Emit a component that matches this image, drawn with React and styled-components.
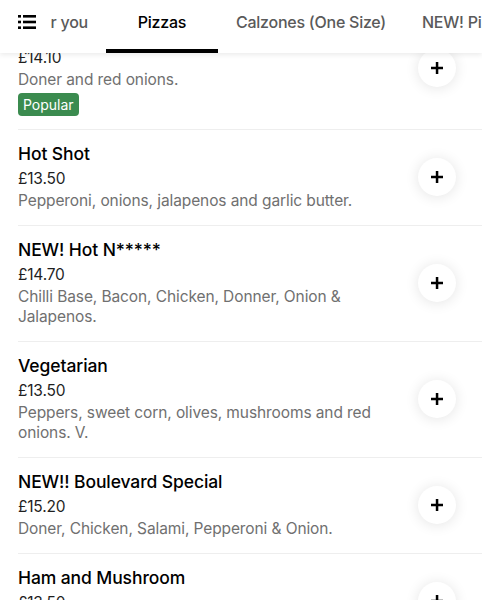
import styled, { createGlobalStyle } from "styled-components";

const GlobalStyle = createGlobalStyle`
  html, body {
    margin: 0;
    padding: 0;
    background: #ffffff;
    font-family: "Inter", "Noto Sans", sans-serif;
    color: #000000;
  }
  * {
    box-sizing: border-box;
  }
`;

const Page = styled.div`
  width: 482px;
  height: 600px;
  overflow: hidden;
  position: relative;
  background: #ffffff;
`;

// sticky category bar, lies over the scrolled list
const Header = styled.header`
  position: absolute;
  top: 0;
  left: 0;
  right: 0;
  height: 53px;
  display: flex;
  align-items: stretch;
  background: #ffffff;
  box-shadow: 0 2px 5px rgba(0, 0, 0, 0.08);
  z-index: 2;
`;

const MenuButton = styled.div`
  width: 51px;
  flex: none;
  display: flex;
  align-items: flex-start;
  padding: 15px 0 0 18px;
  background: #ffffff;
`;

const TabsViewport = styled.nav`
  flex: 1;
  min-width: 0;
  display: flex;
  overflow: hidden;
`;

const ClippedTab = styled.div`
  width: 55px;
  flex: none;
  display: flex;
  justify-content: flex-end;
  overflow: hidden;
  position: relative;
`;

const Tab = styled.div`
  flex: none;
  min-width: 112px;
  height: 53px;
  padding: 11px 18px 0;
  font-size: 16px;
  line-height: 22px;
  font-weight: 500;
  white-space: nowrap;
  text-align: center;
  letter-spacing: -0.25px;
  color: ${(p) => (p.$active ? "#000000" : "#5a5a5a")};
  border-bottom: 4px solid ${(p) => (p.$active ? "#000000" : "transparent")};
`;

const List = styled.main`
  padding-top: 9px;
`;

const Item = styled.div`
  margin-left: 18px;
  padding: 12px 26px 14px 0;
  border-bottom: 1px solid #eeeeee;
  display: flex;
  align-items: center;
  gap: 24px;
`;

const Info = styled.div`
  flex: 1;
  min-width: 0;
`;

const Title = styled.div`
  font-size: 17.5px;
  line-height: 24px;
  font-weight: 500;
  color: #000000;
  letter-spacing: -0.1px;
`;

const Price = styled.div`
  font-size: 15.5px;
  line-height: 25px;
  color: #1f1f1f;
  letter-spacing: -0.2px;
`;

const Description = styled.div`
  font-size: 15.5px;
  line-height: 20px;
  color: #707070;
  letter-spacing: -0.1px;
`;

const Badge = styled.div`
  width: fit-content;
  margin-top: 3px;
  margin-bottom: -1px;
  padding: 0 5px;
  height: 23px;
  line-height: 23px;
  font-size: 14px;
  color: #ffffff;
  background: #3b8b4f;
  border-radius: 4px;
`;

const AddButton = styled.button`
  flex: none;
  width: 38px;
  height: 38px;
  border-radius: 50%;
  border: none;
  padding: 0;
  background: #ffffff;
  box-shadow: 0 1px 14px rgba(0, 0, 0, 0.11);
  display: flex;
  align-items: center;
  justify-content: center;
  cursor: pointer;
`;

const ListIcon = () => (
  <svg width="18" height="14" viewBox="0 0 18 14" fill="#000">
    <rect x="0" y="0" width="3" height="2.6" />
    <rect x="5" y="0" width="13" height="2.6" />
    <rect x="0" y="5.7" width="3" height="2.6" />
    <rect x="5" y="5.7" width="13" height="2.6" />
    <rect x="0" y="11.4" width="3" height="2.6" />
    <rect x="5" y="11.4" width="13" height="2.6" />
  </svg>
);

const PlusIcon = () => (
  <svg width="12" height="12" viewBox="0 0 12 12" fill="#000">
    <rect x="4.8" y="0" width="2.5" height="12" />
    <rect x="0" y="4.75" width="12" height="2.5" />
  </svg>
);

const items = [
  { title: "Doner", price: "£14.10", desc: "Doner and red onions.", popular: true },
  { title: "Hot Shot", price: "£13.50", desc: "Pepperoni, onions, jalapenos and garlic butter." },
  {
    title: "NEW! Hot N*****",
    price: "£14.70",
    desc: "Chilli Base, Bacon, Chicken, Donner, Onion & Jalapenos.",
  },
  {
    title: "Vegetarian",
    price: "£13.50",
    desc: "Peppers, sweet corn, olives, mushrooms and red onions. V.",
  },
  {
    title: "NEW!! Boulevard Special",
    price: "£15.20",
    desc: "Doner, Chicken, Salami, Pepperoni & Onion.",
  },
  { title: "Ham and Mushroom", price: "£13.50", desc: "Ham and mushrooms." },
];

export default function App() {
  return (
    <Page>
      <GlobalStyle />
      <Header>
        <MenuButton>
          <ListIcon />
        </MenuButton>
        <TabsViewport>
          <ClippedTab>
            <Tab>Picked for you</Tab>
          </ClippedTab>
          <Tab $active>Pizzas</Tab>
          <Tab>Calzones (One Size)</Tab>
          <Tab>NEW! Pizza Deals</Tab>
        </TabsViewport>
      </Header>
      <List>
        {items.map((item) => (
          <Item key={item.title}>
            <Info>
              <Title>{item.title}</Title>
              <Price>{item.price}</Price>
              <Description>{item.desc}</Description>
              {item.popular && <Badge>Popular</Badge>}
            </Info>
            <AddButton aria-label="Add">
              <PlusIcon />
            </AddButton>
          </Item>
        ))}
      </List>
    </Page>
  );
}
